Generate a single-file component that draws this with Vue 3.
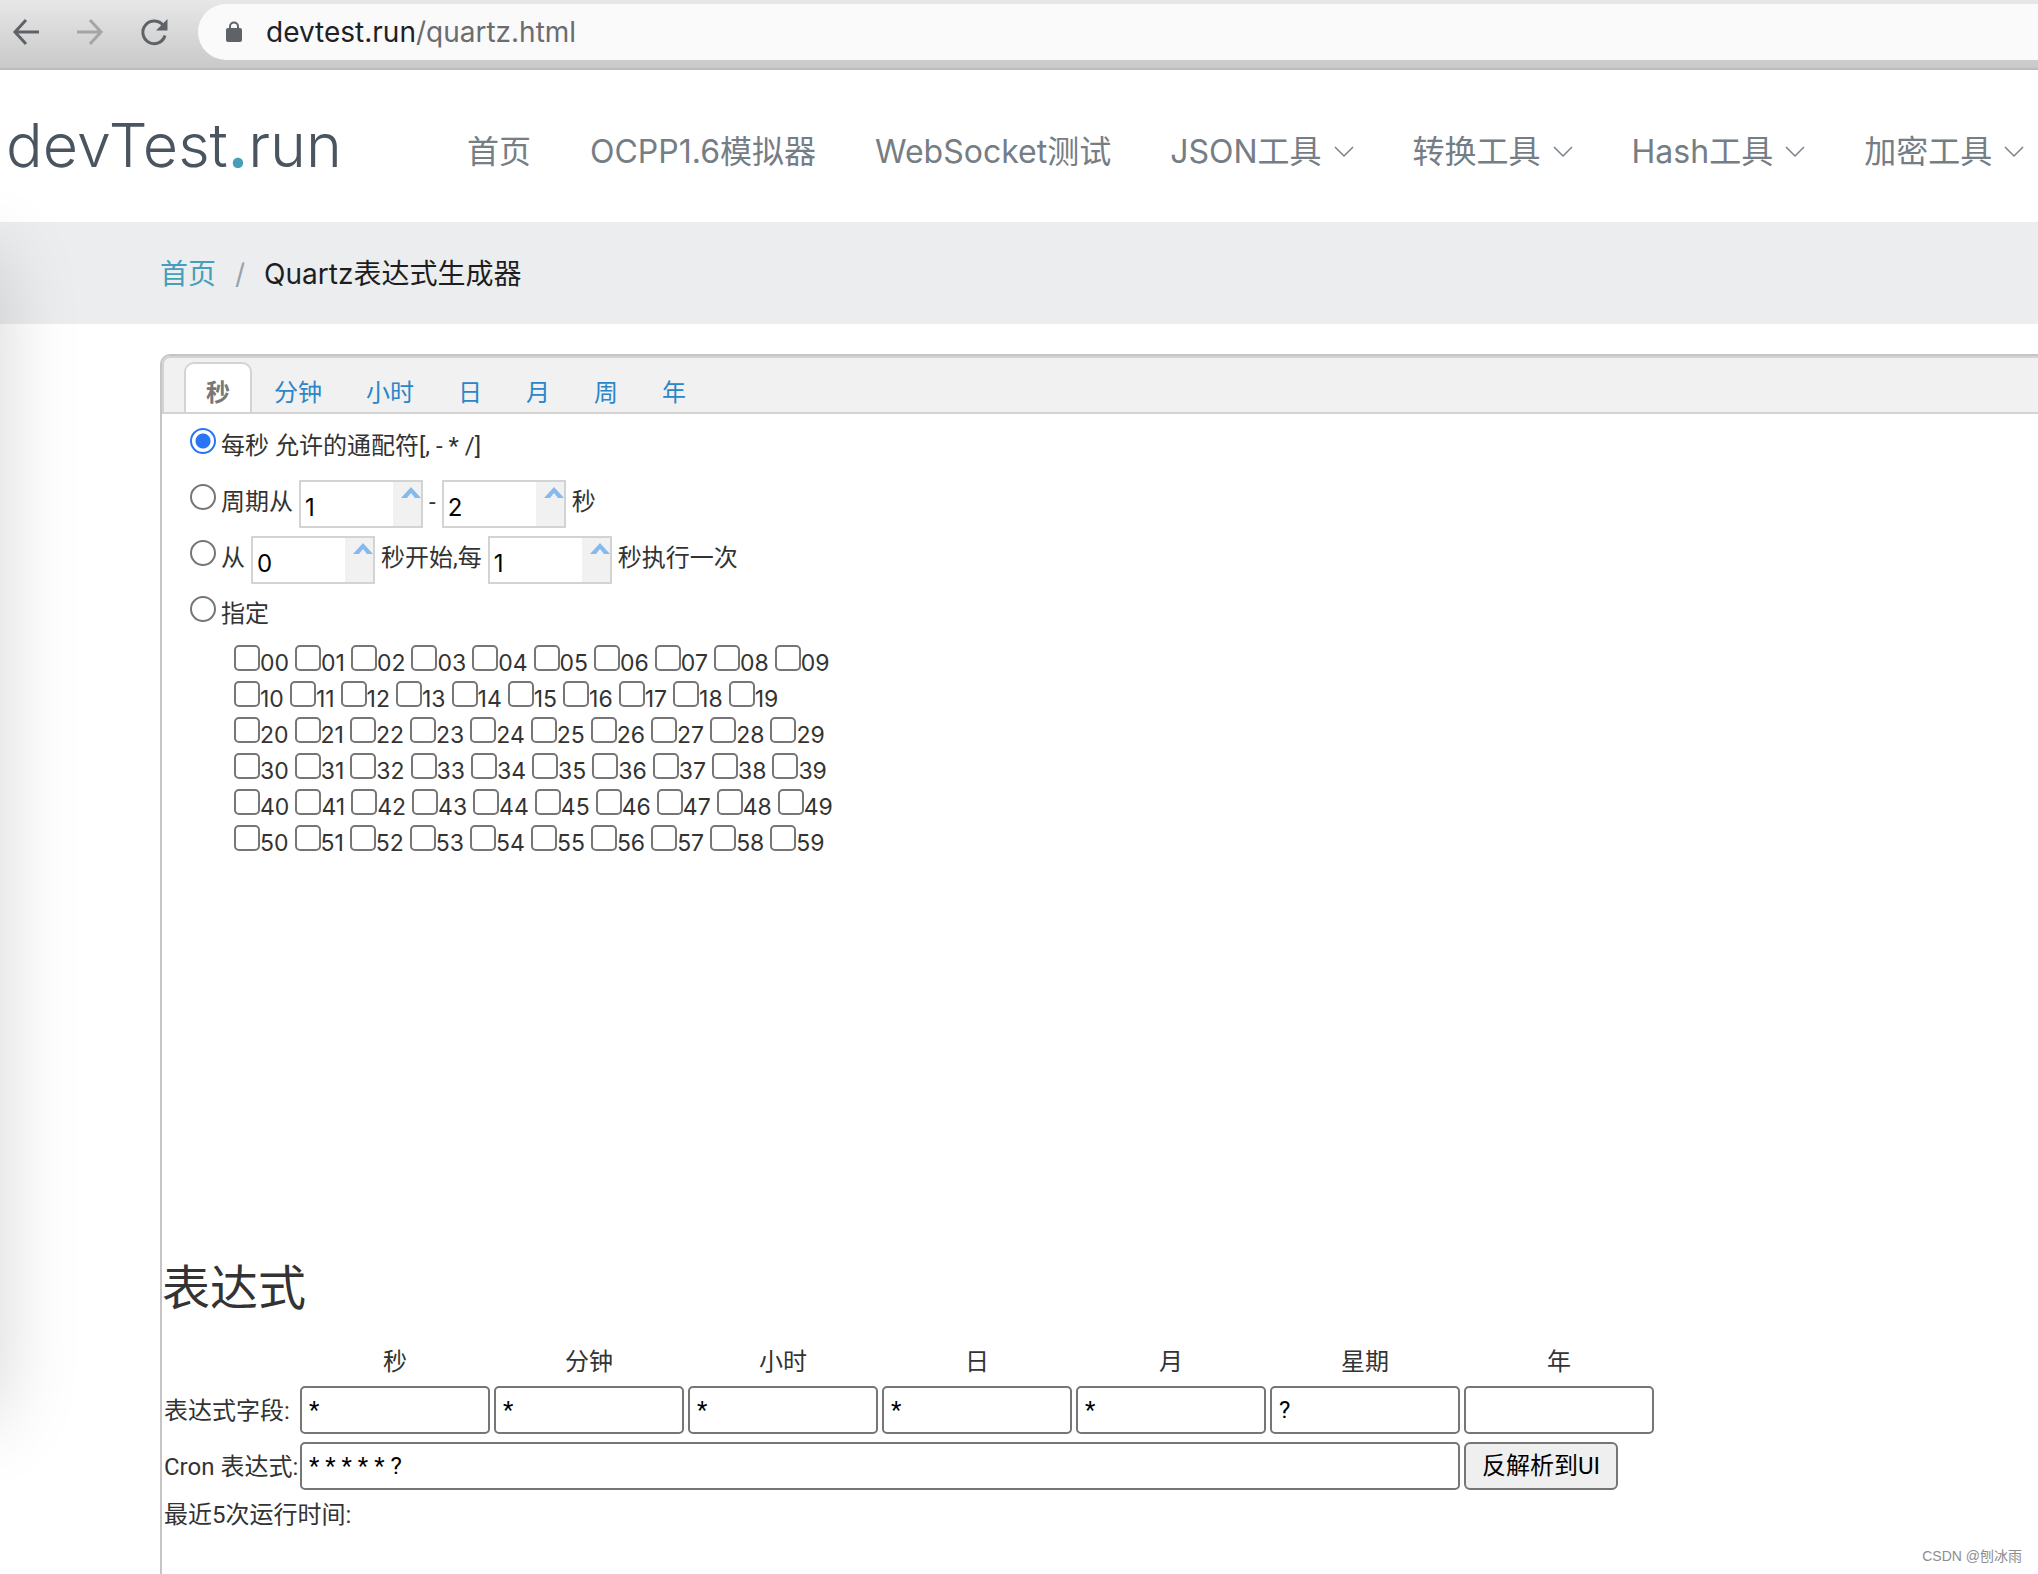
<script setup>
import { ref } from 'vue'

const nav = [
  { text: '首页' },
  { text: 'OCPP1.6模拟器' },
  { text: 'WebSocket测试' },
  { text: 'JSON工具', menu: true },
  { text: '转换工具', menu: true },
  { text: 'Hash工具', menu: true },
  { text: '加密工具', menu: true },
]
const tabs = ['秒', '分钟', '小时', '日', '月', '周', '年']
const activeTab = ref('秒')
const mode = ref('every')
const range = ref({ from: '1', to: '2' })
const step = ref({ start: '0', every: '1' })
const picked = ref([])
const seconds = Array.from({ length: 6 }, (_, r) =>
  Array.from({ length: 10 }, (_, c) => `${r}${c}`)
)
const fields = ref([
  { name: '秒', value: '*' },
  { name: '分钟', value: '*' },
  { name: '小时', value: '*' },
  { name: '日', value: '*' },
  { name: '月', value: '*' },
  { name: '星期', value: '?' },
  { name: '年', value: '' },
])
const cron = ref('* * * * * ?')
</script>

<template>
  <div class="page">
    <div class="browser-bar">
      <button class="tool" aria-label="后退">
        <svg width="32" height="32" viewBox="0 0 32 32" fill="none" stroke="#5f6368" stroke-width="3">
          <path d="M29 16H5M16 4L5 16l11 12" />
        </svg>
      </button>
      <button class="tool" aria-label="前进">
        <svg width="32" height="32" viewBox="0 0 32 32" fill="none" stroke="#a5a5a6" stroke-width="3">
          <path d="M3 16h24M16 4l11 12-11 12" />
        </svg>
      </button>
      <button class="tool" aria-label="刷新">
        <svg width="32" height="32" viewBox="0 0 32 32">
          <path d="M25.5 10A11.3 11.3 0 1 0 27 19.500" fill="none" stroke="#5f6368" stroke-width="3" />
          <path d="M29.500 3v11.500H18z" fill="#5f6368" />
        </svg>
      </button>
      <div class="address">
        <svg width="16" height="22" viewBox="0 0 16 22">
          <path d="M4 9V5.500a4 4 0 0 1 8 0V9" fill="none" stroke="#5f6368" stroke-width="2" />
          <rect y="7" width="16" height="14" rx="2" fill="#5f6368" />
        </svg>
        <span class="url">devtest.run<span class="path">/quartz.html</span></span>
      </div>
    </div>

    <header class="site-header">
      <a class="logo" href="#">devTest<b>.</b>run</a>
      <nav class="nav">
        <a v-for="item in nav" :key="item.text" href="#">
          {{ item.text }}
          <svg v-if="item.menu" width="20" height="12" viewBox="0 0 20 12" fill="none" stroke="#7a828a" stroke-width="1.500">
            <path d="M1 1l9 9 9-9" />
          </svg>
        </a>
      </nav>
    </header>

    <div class="breadcrumb">
      <a href="#">首页</a>
      <span class="slash">/</span>
      <span>Quartz表达式生成器</span>
    </div>

    <div class="side-shadow"></div>

    <main class="panel">
      <div class="tabs" role="tablist">
        <button
          v-for="tab in tabs"
          :key="tab"
          role="tab"
          class="tab"
          :class="{ active: tab === activeTab }"
          @click="activeTab = tab"
        >{{ tab }}</button>
      </div>

      <section class="tab-body">
        <div class="option">
          <input id="m-every" v-model="mode" type="radio" name="mode" value="every" />
          <label for="m-every">每秒 允许的通配符[, - * /]</label>
        </div>
        <div class="option">
          <input id="m-range" v-model="mode" type="radio" name="mode" value="range" />
          <label for="m-range">周期从</label>
          <span class="spinner">
            <input v-model="range.from" type="text" aria-label="开始秒" />
            <button aria-label="增加"><svg width="20" height="11" viewBox="0 0 20 11"><path d="M0 11L10 0l10 11h-6l-4-5-4 5z" fill="#86b9ec" /></svg></button>
          </span>
          <span class="word">-</span>
          <span class="spinner">
            <input v-model="range.to" type="text" aria-label="结束秒" />
            <button aria-label="增加"><svg width="20" height="11" viewBox="0 0 20 11"><path d="M0 11L10 0l10 11h-6l-4-5-4 5z" fill="#86b9ec" /></svg></button>
          </span>
          <span class="word">秒</span>
        </div>
        <div class="option">
          <input id="m-step" v-model="mode" type="radio" name="mode" value="step" />
          <label for="m-step">从</label>
          <span class="spinner">
            <input v-model="step.start" type="text" aria-label="起始秒" />
            <button aria-label="增加"><svg width="20" height="11" viewBox="0 0 20 11"><path d="M0 11L10 0l10 11h-6l-4-5-4 5z" fill="#86b9ec" /></svg></button>
          </span>
          <span class="word">秒开始,每</span>
          <span class="spinner">
            <input v-model="step.every" type="text" aria-label="间隔秒" />
            <button aria-label="增加"><svg width="20" height="11" viewBox="0 0 20 11"><path d="M0 11L10 0l10 11h-6l-4-5-4 5z" fill="#86b9ec" /></svg></button>
          </span>
          <span class="word">秒执行一次</span>
        </div>
        <div class="option">
          <input id="m-pick" v-model="mode" type="radio" name="mode" value="pick" />
          <label for="m-pick">指定</label>
        </div>
        <div class="seconds">
          <div v-for="(row, r) in seconds" :key="r" class="second-row">
            <label v-for="s in row" :key="s"><input v-model="picked" type="checkbox" :value="s" /><span>{{ s }}</span></label>
          </div>
        </div>
      </section>

      <h2>表达式</h2>
      <table>
        <colgroup>
          <col class="label-col" />
          <col v-for="f in fields" :key="f.name" class="field-col" />
        </colgroup>
        <thead>
          <tr>
            <td></td>
            <th v-for="f in fields" :key="f.name" scope="col">{{ f.name }}</th>
          </tr>
        </thead>
        <tbody>
          <tr>
            <th scope="row">表达式字段:</th>
            <td v-for="f in fields" :key="f.name"><input v-model="f.value" type="text" :aria-label="f.name" /></td>
          </tr>
          <tr>
            <th scope="row"><label for="cron">Cron 表达式:</label></th>
            <td colspan="6"><input id="cron" v-model="cron" type="text" /></td>
            <td><button class="parse">反解析到UI</button></td>
          </tr>
          <tr class="runs">
            <th scope="row" colspan="8">最近5次运行时间:</th>
          </tr>
        </tbody>
      </table>
    </main>

    <div class="watermark">CSDN @刨冰雨</div>
  </div>
</template>

<style>
body {
  margin: 0;
  background: #fff;
}
</style>

<style scoped>
.page {
  position: relative;
  display: flex;
  flex-direction: column;
  min-height: 100vh;
  overflow: hidden;
  box-sizing: border-box;
  font-family: Inter, "Noto Sans CJK SC", sans-serif;
  font-size: 24px;
  line-height: 32px;
  color: #333;
}
.page * {
  box-sizing: border-box;
}
button,
input {
  margin: 0;
  padding: 0;
  border: 0;
  font: inherit;
  color: #000;
  background: none;
}
a {
  color: inherit;
  text-decoration: none;
}
svg {
  display: block;
}

.browser-bar {
  display: flex;
  align-items: center;
  gap: 32px;
  height: 70px;
  padding: 0 0 4px 10px;
  background: linear-gradient(#e7e7e7, #c9c9c9);
  border-bottom: 2px solid #bcbcbc;
}
.tool {
  flex: none;
  width: 32px;
}
.address {
  flex: 1;
  display: flex;
  align-items: center;
  gap: 24px;
  height: 56px;
  margin-left: -4px;
  padding-left: 28px;
  border-radius: 28px 0 0 28px;
  background: #fafafa;
}
.url {
  font-size: 28px;
  color: #202124;
}
.path {
  color: #6b6c6e;
}

.site-header {
  display: flex;
  align-items: center;
  height: 152px;
  padding-left: 6px;
  white-space: nowrap;
}
.logo {
  flex: none;
  width: 461px;
  padding-bottom: 2px;
  font-size: 61px;
  font-weight: 300;
  line-height: 72px;
  color: #4a5560;
}
.logo b {
  font-weight: 700;
  color: #469fba;
}
.nav {
  display: flex;
  gap: 59px;
  padding-top: 12px;
  font-size: 32px;
  font-weight: 400;
  line-height: 44px;
  color: #757d85;
}
.nav a {
  display: flex;
  align-items: center;
  gap: 12px;
}

.breadcrumb {
  display: flex;
  align-items: center;
  gap: 19px;
  height: 102px;
  padding: 1px 0 0 160px;
  font-size: 28px;
  color: #1c1e22;
  background: #ecedef;
}
.breadcrumb a {
  color: #469fba;
}
.slash {
  color: #98a2ad;
}

.side-shadow {
  position: absolute;
  top: 256px;
  right: 100%;
  width: 200px;
  height: 1160px;
  box-shadow: 0 0 80px rgba(0, 0, 0, 0.17);
}

.panel {
  flex: 1;
  margin: 30px 0 0 160px;
  border: 2px solid #c8c3c5;
  border-width: 2px 0 0 2px;
  border-radius: 10px 0 0 0;
  font-family: Roboto, "Noto Sans CJK SC", sans-serif;
}
.tabs {
  display: flex;
  align-items: flex-end;
  height: 58px;
  padding-left: 20px;
  background: #f1f1f1;
  border: 2px solid #d3d3d3;
  border-right: 0;
  border-radius: 8px 0 0 0;
}
.tab {
  height: 50px;
  padding: 10px 20px 0;
  border: 2px solid transparent;
  border-bottom: 0;
  border-radius: 10px 10px 0 0;
  line-height: 32px;
  color: #2a86c8;
}
.tab.active {
  background: #fff;
  border-color: #d3d3d3;
  color: #777;
  font-weight: 700;
}
.tab-body {
  min-height: 848px;
  padding: 6px 0 0 28px;
}
.option {
  display: flex;
  align-items: center;
  gap: 6px;
  height: 56px;
}
.option > label {
  margin: 0 0 4px -1px;
}
.word {
  margin-bottom: 4px;
}
input[type='radio'],
input[type='checkbox'] {
  flex: none;
  appearance: none;
  width: 26px;
  height: 26px;
  border: 2px solid #767676;
  background: #fff;
}
input[type='radio'] {
  margin-bottom: 14px;
  border-radius: 50%;
}
input[type='radio']:checked {
  border-color: #2a75f6;
  background: radial-gradient(circle, #2a75f6 7px, #fff 8px);
}
input[type='checkbox'] {
  border-radius: 5px;
}
.spinner {
  display: flex;
  width: 124px;
  height: 48px;
  border: 2px solid #d3d3d3;
}
.spinner input {
  flex: 1;
  width: 0;
  padding: 8px 0 0 4px;
  font-family: Inter, sans-serif;
}
.spinner button {
  display: flex;
  justify-content: flex-end;
  align-items: flex-start;
  width: 28px;
  padding-top: 5px;
  background: #f1f1f1;
}
.seconds {
  padding: 1px 0 0 44px;
  font-family: Inter, sans-serif;
  font-size: 23px;
}
.second-row {
  display: flex;
  gap: 6px;
  height: 36px;
}
.second-row label {
  display: flex;
  line-height: 36px;
}

h2 {
  margin: 0;
  font-size: 48px;
  font-weight: 400;
  line-height: 54px;
}
table {
  table-layout: fixed;
  width: 1494px;
  margin: 24px 0 0 2px;
  border-collapse: collapse;
}
.label-col {
  width: 136px;
}
.field-col {
  width: 194px;
}
th,
td {
  height: 56px;
  padding: 0 4px 0 0;
  font-weight: 400;
  white-space: nowrap;
}
th[scope='row'] {
  padding: 2px 0 0;
  text-align: left;
}
thead th,
thead td {
  height: 42px;
  padding-top: 2px;
}
.runs th {
  height: 40px;
}
td input {
  display: block;
  width: 100%;
  height: 48px;
  padding: 0 7px;
  border: 2px solid #767676;
  border-radius: 5px;
}
.parse {
  display: block;
  height: 48px;
  padding: 0 16px;
  border: 2px solid #767676;
  border-radius: 6px;
  background: #efefef;
}
.watermark {
  position: absolute;
  right: 16px;
  bottom: 8px;
  font-family: "Liberation Sans", "Noto Sans CJK SC", sans-serif;
  font-size: 14px;
  line-height: 20px;
  color: #8e8e8e;
}
</style>
